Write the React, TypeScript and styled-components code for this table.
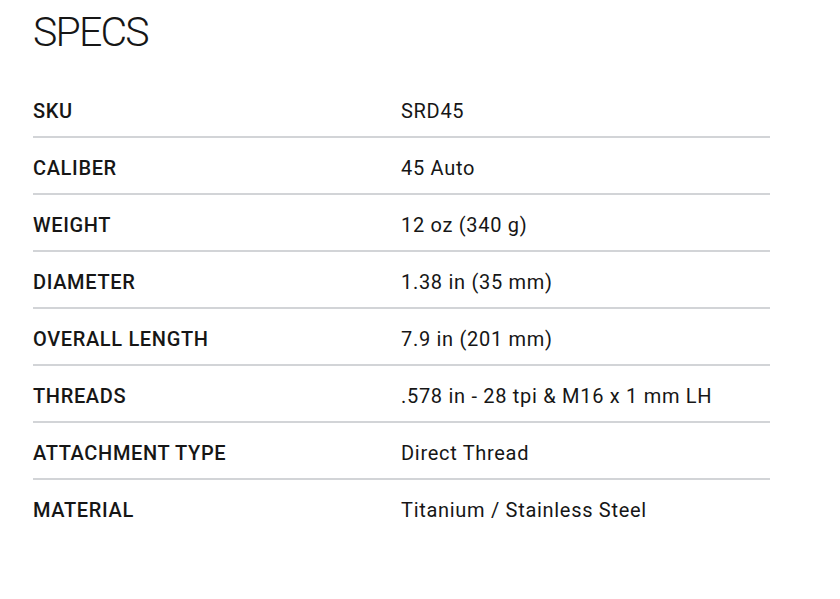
import styled, { createGlobalStyle } from 'styled-components';

const GlobalStyle = createGlobalStyle`
  body {
    margin: 0;
    background: #ffffff;
    font-family: Roboto, "Liberation Sans", sans-serif;
    color: #161616;
  }
`;

const Page = styled.div`
  width: 840px;
  height: 599px;
  padding: 7px 70px 0 33px;
  box-sizing: border-box;
`;

const Title = styled.h2`
  margin: 0 0 24px;
  font-size: 41px;
  line-height: 50px;
  font-weight: 300;
  letter-spacing: -1.8px;
`;

const Table = styled.div`
  display: flex;
  flex-direction: column;
`;

const Row = styled.div<{ $last?: boolean }>`
  display: grid;
  grid-template-columns: 368px 1fr;
  align-items: center;
  height: 57px;
  padding-top: 4px;
  box-sizing: border-box;
  border-bottom: 2px solid ${(p) => (p.$last ? 'transparent' : '#d2d4d7')};
`;

const Label = styled.div`
  font-size: 20px;
  font-weight: 500;
  letter-spacing: 0.65px;
`;

const Value = styled.div`
  font-size: 20px;
  font-weight: 400;
  letter-spacing: 0.7px;
`;

const specs = [
  ['SKU', 'SRD45'],
  ['CALIBER', '45 Auto'],
  ['WEIGHT', '12 oz (340 g)'],
  ['DIAMETER', '1.38 in (35 mm)'],
  ['OVERALL LENGTH', '7.9 in (201 mm)'],
  ['THREADS', '.578 in - 28 tpi & M16 x 1 mm LH'],
  ['ATTACHMENT TYPE', 'Direct Thread'],
  ['MATERIAL', 'Titanium / Stainless Steel'],
];

const App = () => {
  return (
    <>
      <GlobalStyle />
      <Page>
        <Title>SPECS</Title>
        <Table>
          {specs.map(([label, value], i) => (
            <Row key={label} $last={i === specs.length - 1}>
              <Label>{label}</Label>
              <Value>{value}</Value>
            </Row>
          ))}
        </Table>
      </Page>
    </>
  );
};

export default App;
